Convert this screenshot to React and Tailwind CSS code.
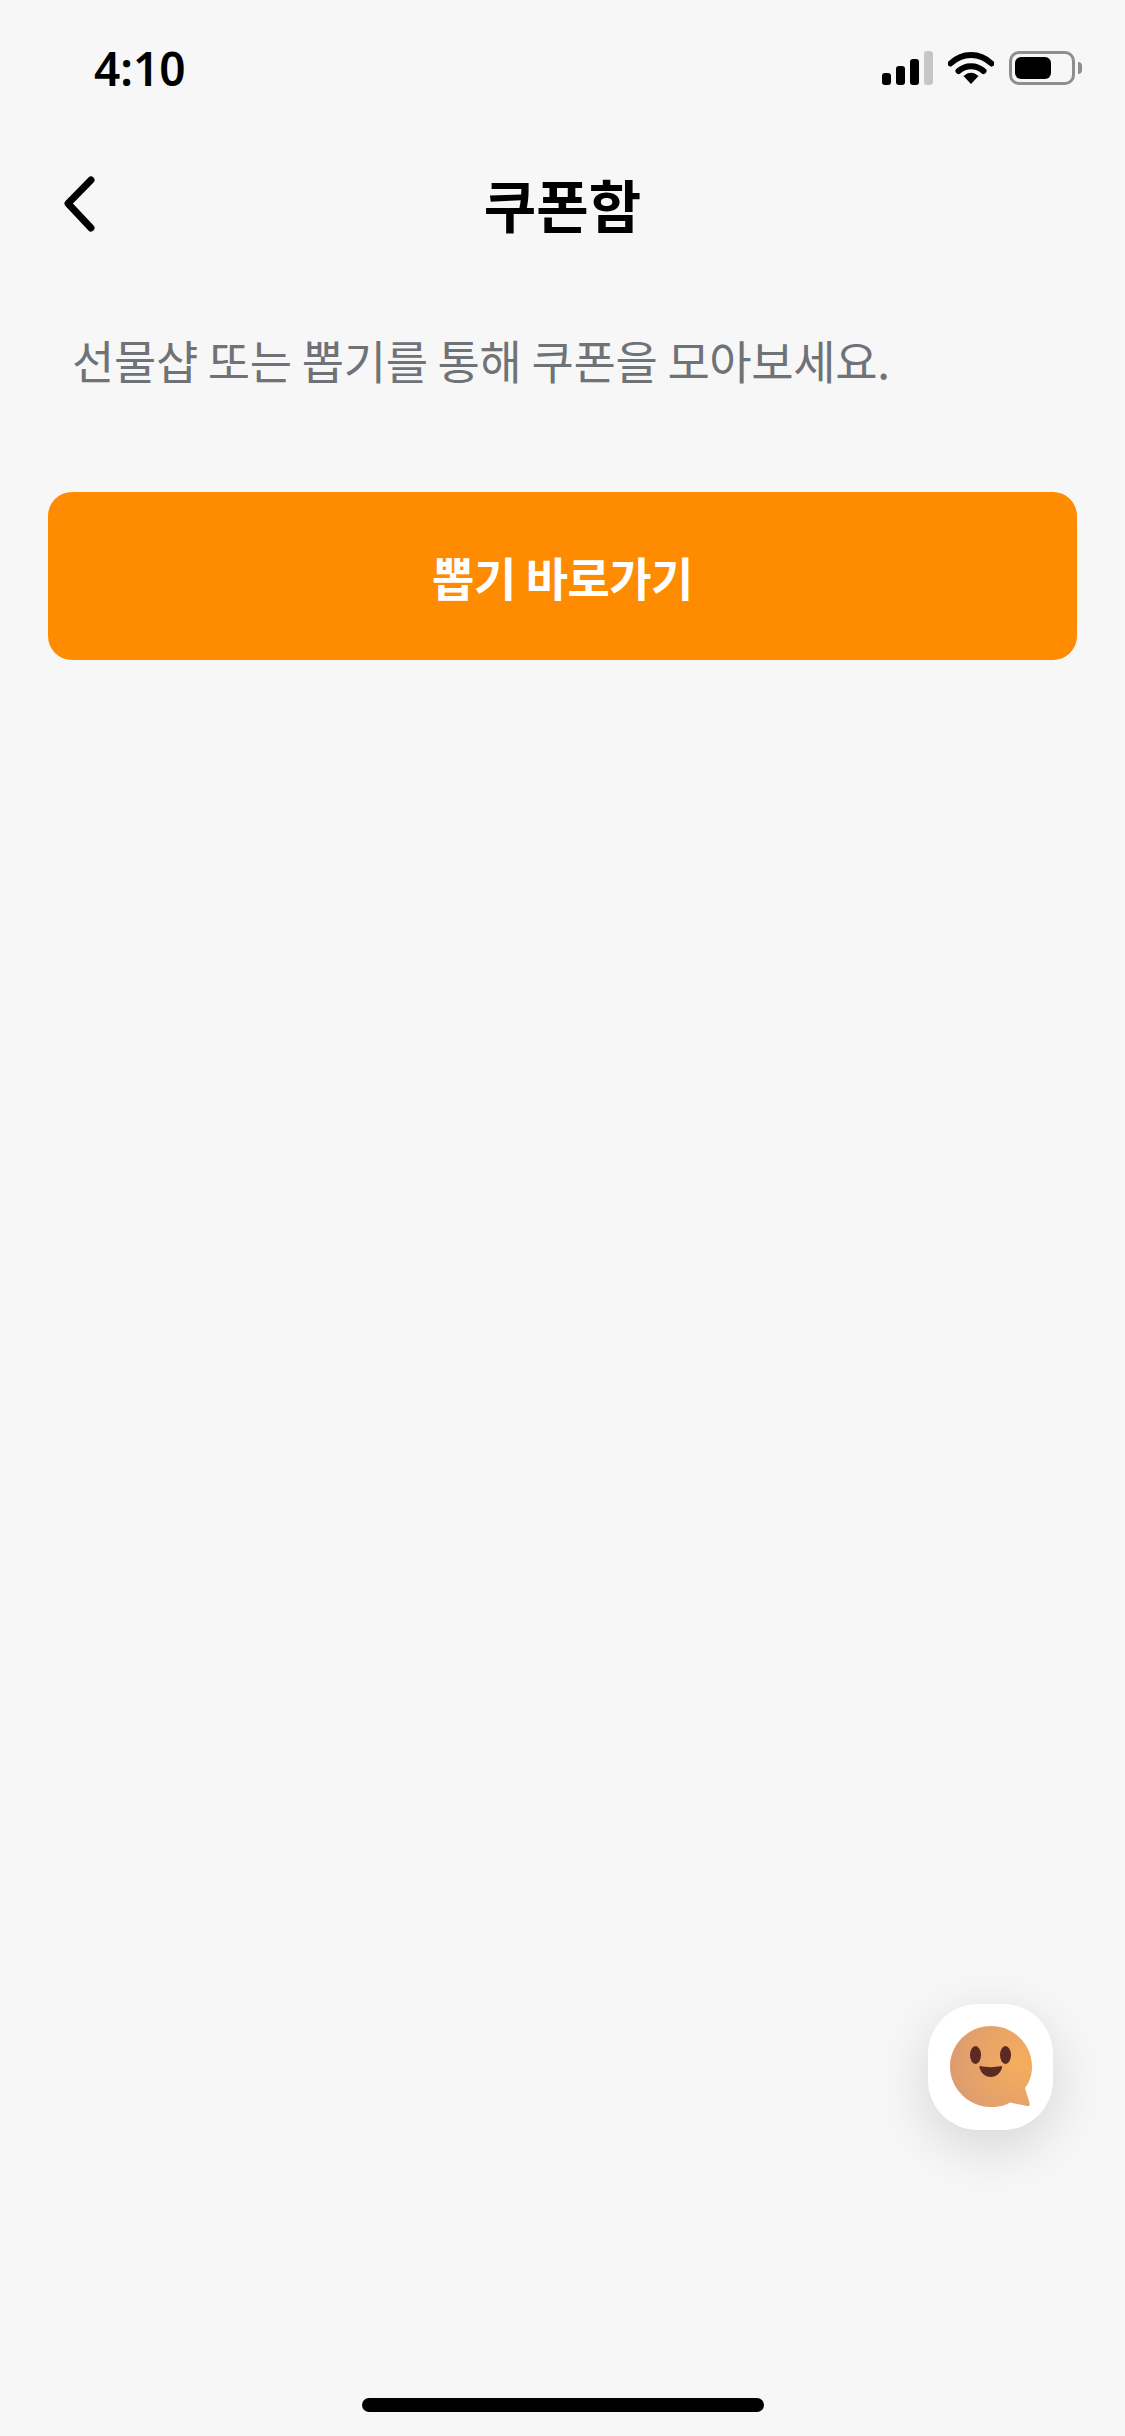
import React from "react";

const KR = { fontFamily: '"Noto Sans CJK KR", "Noto Sans", sans-serif' };

const StatusIcons = () => (
    <div className="flex items-center">
        <svg width="54" height="34" viewBox="0 0 54 34" className="mr-[12px]">
            <rect x="0" y="22" width="9" height="12" rx="3" fill="#000" />
            <rect x="14" y="15" width="9" height="19" rx="3" fill="#000" />
            <rect x="28" y="8" width="9" height="26" rx="3" fill="#000" />
            <rect x="42" y="0" width="9" height="34" rx="3" fill="#c6c6c6" />
        </svg>
        <svg width="46" height="34" viewBox="0 0 46 34" className="mr-[15px]">
            <path d="M2.5 12.5 C14 1 32 1 43.5 12.5" fill="none" stroke="#000" strokeWidth="6" strokeLinecap="round" />
            <path d="M10.5 20 C17.5 13.5 28.5 13.5 35.5 20" fill="none" stroke="#000" strokeWidth="6" strokeLinecap="round" />
            <path d="M15.5 25 C20.5 20.5 25.5 20.5 30.5 25 L23 33 Z" fill="#000" />
        </svg>
        <div className="flex items-center">
            <div className="w-[66px] h-[34px] rounded-[10px] border-[3px] border-[#8e8e8e] p-[3px]">
                <div className="w-[36px] h-full rounded-[6px] bg-black" />
            </div>
            <div className="w-[4px] h-[12px] ml-[3px] rounded-r-full bg-[#8e8e8e]" />
        </div>
    </div>
);

const ChatFace = () => (
    <svg width="88" height="88" viewBox="0 0 88 88">
        <defs>
            <radialGradient id="face" cx="0.85" cy="0.45" r="0.95">
                <stop offset="0" stopColor="#f6ad5c" />
                <stop offset="1" stopColor="#d99a72" />
            </radialGradient>
        </defs>
        <path
            d="M41 1 C63.5 1 82 19 82 41.5 C82 50 80 56 75 63 L79.5 78 C80 80.5 79 81.5 77 81 L60 77.5 C55 80.5 50 82 41 82 C18.5 82 0 63.5 0 41.5 C0 19 18.5 1 41 1 Z"
            fill="url(#face)"
        />
        <ellipse cx="25.500" cy="30" rx="5.500" ry="9" fill="#5a2a23" />
        <ellipse cx="55.500" cy="30" rx="5.500" ry="9" fill="#5a2a23" />
        <path d="M30.500 41 C36 42.500 45 42.500 51 41 C52 41 52.500 42 52 43 C50 49 45.500 52 41 52 C36 52 31.500 49 29.500 43 C29 42 29.500 41 30.500 41 Z" fill="#5a2a23" />
    </svg>
);

export default function App() {
    return (
        <div className="relative flex flex-col w-[1125px] h-[2436px] bg-[#f7f7f7] overflow-hidden" style={KR}>
            <div className="flex items-center justify-between h-[68px] mt-[34px] pl-[94px] pr-[43px]">
                <span className="text-[46px] leading-none font-semibold text-black" style={{ fontFamily: '"Noto Sans", sans-serif' }}>4:10</span>
                <StatusIcons />
            </div>

            <div className="relative flex items-center justify-center h-[96px] mt-[53px]">
                <svg width="34" height="58" viewBox="0 0 34 58" className="absolute left-[62px] top-[20px]">
                    <path d="M29 5 L6 28.500 L29 53" fill="none" stroke="#000" strokeWidth="7" strokeLinecap="round" strokeLinejoin="round" />
                </svg>
                <h1 className="text-[57px] leading-none font-bold text-black">쿠폰함</h1>
            </div>

            <p className="mt-[78px] pl-[72px] text-[46px] leading-[60px] font-normal text-[#6f7276] tracking-[-0.35px]">
                선물샵 또는 뽑기를 통해 쿠폰을 모아보세요.
            </p>

            <button className="flex items-center justify-center h-[168px] mx-[48px] mt-[103px] rounded-[24px] bg-[#ff8c00] text-[46px] font-bold text-white tracking-[-0.5px]">
                뽑기 바로가기
            </button>

            <div className="mt-auto mb-[24px] self-center w-[402px] h-[14px] rounded-full bg-black" />

            <div className="absolute left-[928px] top-[2004px] flex items-center justify-center w-[125px] h-[126px] rounded-[50px] bg-white shadow-[0_16px_56px_rgba(0,0,0,0.14)]">
                <div className="ml-[6px] mt-[4px]">
                    <ChatFace />
                </div>
            </div>
        </div>
    );
}
